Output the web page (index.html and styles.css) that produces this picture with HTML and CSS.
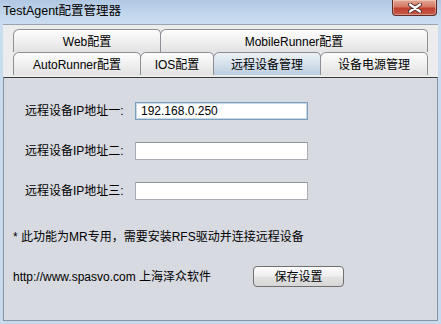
FILE: index.html
```html
<!DOCTYPE html>
<html lang="zh-CN">
<head>
<meta charset="utf-8">
<title>TestAgent配置管理器</title>
<link rel="stylesheet" href="styles.css">
</head>
<body>
<div class="window">
  <div class="titlebar">
    <span class="title">TestAgent配置管理器</span>
    <div class="close">
      <svg width="16" height="10" viewBox="0 0 16 10">
        <path d="M3 1.5 L13 8.5 M13 1.5 L3 8.5" stroke="#4a2a26" stroke-width="4" stroke-linecap="round"/>
        <path d="M3 1.5 L13 8.5 M13 1.5 L3 8.5" stroke="#ffffff" stroke-width="2.2" stroke-linecap="round"/>
      </svg>
    </div>
  </div>
  <div class="client">
    <div class="tabs">
      <div class="tabrow row1">
        <div class="tab">Web配置</div>
        <div class="tab">MobileRunner配置</div>
      </div>
      <div class="tabrow row2">
        <div class="tab">AutoRunner配置</div>
        <div class="tab">IOS配置</div>
        <div class="tab selected">远程设备管理</div>
        <div class="tab">设备电源管理</div>
      </div>
    </div>
    <div class="panel">
      <div class="form">
        <label class="lbl">远程设备IP地址一:</label><div class="field focus">192.168.0.250</div>
        <label class="lbl">远程设备IP地址二:</label><div class="field"></div>
        <label class="lbl">远程设备IP地址三:</label><div class="field"></div>
      </div>
      <p class="note">* 此功能为MR专用，需要安装RFS驱动并连接远程设备</p>
      <div class="footer">
        <span class="link">http://www.spasvo.com 上海泽众软件</span>
        <button class="btn">保存设置</button>
      </div>
    </div>
  </div>
</div>
</body>
</html>
```
FILE: styles.css
```css
* { box-sizing: border-box; }
html, body { margin: 0; padding: 0; }
body {
  width: 441px;
  height: 324px;
  overflow: hidden;
  font-family: "Liberation Sans", "Noto Sans CJK SC", sans-serif;
  font-size: 12px;
  color: #000;
}
.window {
  width: 441px;
  height: 324px;
  display: flex;
  flex-direction: column;
  background: linear-gradient(180deg, #b0c8e3 0px, #c0d5eb 12px, #cadcef 24px, #c6d9ed 100%);
}
.titlebar {
  height: 24px;
  display: flex;
  align-items: flex-start;
  padding-left: 3px;
}
.title {
  margin-top: 4px;
  font-size: 12.5px;
  line-height: 15px;
  color: #000;
}
.close {
  margin-left: auto;
  margin-right: 4px;
  width: 45px;
  height: 16px;
  border: 1px solid #5e2d28;
  border-top: none;
  border-radius: 0 0 4px 4px;
  background: linear-gradient(180deg, #e5a593 0%, #d47866 45%, #c0412e 55%, #c8594a 100%);
  display: flex;
  align-items: center;
  justify-content: center;
  box-shadow: inset 0 0 0 1px rgba(255,255,255,0.35);
}
.close svg { display: block; }
.client {
  flex: 1;
  margin: 0 3px 3px 3px;
  display: flex;
  flex-direction: column;
  background: #ececec;
  border-top: 1px solid #9aa3ad;
}
.tabs {
  padding: 4px 10px 2px 10px;
}
.tabrow {
  display: grid;
  height: 23px;
}
.row1 { grid-template-columns: 148px 267px; }
.row2 { grid-template-columns: 128px 73px 107px 107px; }
.tab {
  border: 1px solid #8c8f96;
  border-bottom: none;
  border-radius: 6px 5px 0 0;
  background: linear-gradient(180deg, #fdfdfd 0%, #f0f0f0 50%, #e2e2e2 100%);
  display: flex;
  align-items: center;
  justify-content: center;
  line-height: 14px;
  padding-top: 1px;
}
.tab + .tab { margin-left: -1px; }
.tab.selected {
  background: linear-gradient(180deg, #edf2f7 0%, #d5e0eb 50%, #bccde0 100%);
}
.panel {
  flex: 1;
  background: #d7dae1;
  border: 1px solid #8593a3;
  border-top: 1px solid #3c3c3c;
  padding: 24px 9px 0 9px;
}
.form {
  margin-left: 12px;
  display: grid;
  grid-template-columns: 110px 173px;
  grid-auto-rows: 18px;
  row-gap: 22px;
  align-items: center;
}
.lbl {
  line-height: 14px;
}
.field {
  height: 18px;
  background: #fff;
  border: 1px solid #a9adb3;
  border-top-color: #8e9399;
  padding-left: 5px;
  line-height: 16px;
  font-size: 12px;
}
.field.focus {
  border: 1px solid #7b9ebd;
  box-shadow: inset 0 0 0 1px #c9d9ea;
}
.note {
  margin: 30px 0 0 0;
  line-height: 14px;
}
.footer {
  margin-top: 22px;
  display: flex;
  align-items: center;
  gap: 42px;
}
.link { line-height: 14px; }
.btn {
  width: 91px;
  height: 21px;
  border: 1px solid #707070;
  border-radius: 4px;
  background: linear-gradient(180deg, #fbfbfb 0%, #f0f0f0 45%, #e2e2e2 55%, #d6d6d6 100%);
  font-family: "Liberation Sans", "Noto Sans CJK SC", sans-serif;
  font-size: 12px;
  line-height: 14px;
  color: #000;
  padding: 0;
}
```
